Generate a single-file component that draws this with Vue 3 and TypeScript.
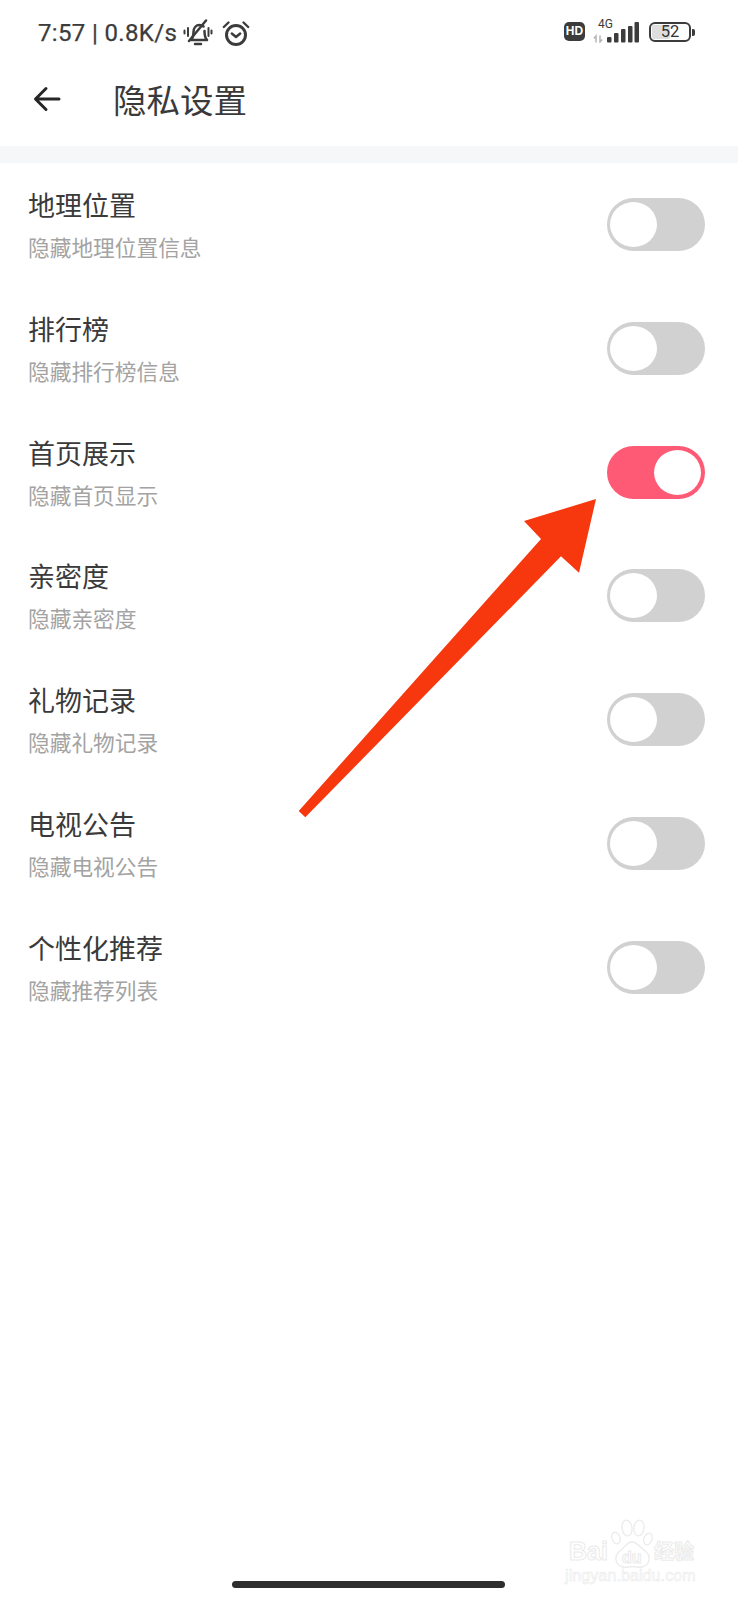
<template>
  <div class="page">
    <header class="status">
      <div class="status-left">
        <span class="clock">7:57 | 0.8K/s</span>
        <svg class="ic-bell" viewBox="0 0 30 28" fill="none" stroke="#3c3c3c" stroke-linecap="round" stroke-linejoin="round">
          <path d="M8 21c2-2 2.500-4 2.500-8 0-4 2.500-7 6-7 1.500 0 3 .5 4 1.500M21.500 12c0 4 .5 7 2.500 9H8" stroke-width="2.500" />
          <path d="M12 25h6" stroke-width="2.500" />
          <path d="M6 22 23 1.500" stroke-width="2.500" />
          <path d="M5 9v8M1.500 11.500v3M25.500 9v8M28.500 11.500v3" stroke-width="2" />
        </svg>
        <svg class="ic-alarm" viewBox="0 0 28 26" fill="none" stroke="#3c3c3c">
          <circle cx="14" cy="15" r="9.500" stroke-width="3" />
          <path d="m9.800 13.500 4.200 3.500 4.200-3.500" stroke-width="2.400" stroke-linecap="round" stroke-linejoin="round" />
          <path d="M1.800 7 6.500 2.500M26.200 7l-4.700-4.500" stroke-width="2.400" stroke-linecap="round" />
        </svg>
      </div>
      <div class="status-right">
        <span class="hd">HD</span>
        <div class="signal">
          <span class="net">4G</span>
          <svg class="ic-signal" viewBox="0 0 46 23" fill="#3c3c3c">
            <path d="M3 22.500v-6.500L.8 18.500M7 15.500V22l2.200-2.500" fill="none" stroke="#b4b4b4" stroke-width="1.500" />
            <rect x="14" y="17" width="4.500" height="5.500" rx="1" />
            <rect x="21" y="13" width="4.500" height="9.500" rx="1" />
            <rect x="28" y="9" width="4.500" height="13.500" rx="1" />
            <rect x="35" y="6" width="4.500" height="16.500" rx="1" />
            <rect x="41.500" y="2" width="4.500" height="20.500" rx="1" />
          </svg>
        </div>
        <div class="battery">
          <div class="battery-body">
            <span class="battery-fill"></span>
            <span class="battery-num">52</span>
          </div>
          <span class="battery-cap"></span>
        </div>
      </div>
    </header>

    <nav class="topbar">
      <svg class="ic-back" viewBox="0 0 28 26" fill="none" stroke="#262626" stroke-width="3" stroke-linecap="round" stroke-linejoin="round">
        <path d="M26 13H3M13 2.500 2.500 13 13 23.500" />
      </svg>
      <h1>隐私设置</h1>
    </nav>
    <div class="band"></div>

    <ul class="list">
      <li v-for="item in items" :key="item.title" class="row">
        <div class="text">
          <div class="title">{{ item.title }}</div>
          <div class="sub">{{ item.sub }}</div>
        </div>
        <span class="switch" :class="{ on: item.on }"><i></i></span>
      </li>
    </ul>

    <svg class="arrow" viewBox="0 0 738 1600">
      <polygon points="596,499 524,521 541,539 298.700,811 305.300,817.300 561,556.300 579,572.700" fill="#f7370e" />
    </svg>

    <div class="home-bar"></div>

    <div class="watermark">
      <svg class="paw" viewBox="0 0 44 52" fill="none" stroke="#ebebeb" stroke-width="1.300">
        <ellipse cx="6" cy="20" rx="4" ry="6" transform="rotate(-20 6 20)" />
        <ellipse cx="17" cy="10" rx="5" ry="8" transform="rotate(-8 17 10)" />
        <ellipse cx="29" cy="10" rx="5" ry="8" transform="rotate(8 29 10)" />
        <ellipse cx="38" cy="21" rx="4" ry="6" transform="rotate(20 38 21)" />
        <path d="M22 24c-5 0-7 5-11 8-4 3-6 6-5 10 1 6 7 8 12 7 3-.5 6-.5 9 0 5 1 11-1 12-7 1-4-1-7-5-10-4-3-7-8-12-8Z" />
      </svg>
      <span class="wm-bai">Bai</span>
      <span class="wm-du">du</span>
      <span class="wm-cn">经验</span>
      <span class="wm-url">jingyan.baidu.com</span>
    </div>
  </div>
</template>

<script setup lang="ts">
interface PrivacyItem {
  title: string
  sub: string
  on?: boolean
}

const items: PrivacyItem[] = [
  { title: '地理位置', sub: '隐藏地理位置信息' },
  { title: '排行榜', sub: '隐藏排行榜信息' },
  { title: '首页展示', sub: '隐藏首页显示', on: true },
  { title: '亲密度', sub: '隐藏亲密度' },
  { title: '礼物记录', sub: '隐藏礼物记录' },
  { title: '电视公告', sub: '隐藏电视公告' },
  { title: '个性化推荐', sub: '隐藏推荐列表' }
]
</script>

<style>
html,
body {
  margin: 0;
  background: #fff;
}
</style>

<style scoped>
.page {
  position: relative;
  width: 738px;
  height: 1600px;
  overflow: hidden;
  background: #fff;
  font-family: 'Noto Sans CJK SC', 'Noto Sans', sans-serif;
}

.status {
  height: 64px;
  box-sizing: border-box;
  padding: 18px 43px 0 38px;
  display: flex;
  justify-content: space-between;
  align-items: flex-start;
}

.status-left {
  display: flex;
  align-items: center;
  height: 30px;
}

.clock {
  font-family: Roboto, 'Noto Sans', sans-serif;
  font-size: 24px;
  line-height: 30px;
  color: #3c3c3c;
  letter-spacing: 0.35px;
  -webkit-text-stroke: 0.25px #3c3c3c;
  white-space: nowrap;
}

.ic-bell {
  width: 30px;
  height: 28px;
  margin-left: 6px;
}

.ic-alarm {
  width: 28px;
  height: 26px;
  margin-left: 9px;
}

.status-right {
  display: flex;
  align-items: flex-start;
}

.hd {
  width: 21px;
  height: 19px;
  margin-top: 4px;
  border-radius: 5px;
  background: #3c3c3c;
  color: #fff;
  font: 700 12px/19px 'Liberation Sans', sans-serif;
  text-align: center;
}

.signal {
  position: relative;
  width: 46px;
  height: 30px;
  margin-left: 8px;
}

.net {
  position: absolute;
  left: 5px;
  top: -1px;
  font: 12px/14px Roboto, sans-serif;
  color: #3c3c3c;
}

.ic-signal {
  position: absolute;
  left: 0;
  top: 2px;
  width: 46px;
  height: 23px;
}

.battery {
  display: flex;
  align-items: center;
  margin-left: 10px;
  margin-top: 4px;
}

.battery-body {
  position: relative;
  width: 38px;
  height: 16px;
  border: 2.500px solid #3c3c3c;
  border-radius: 6px;
}

.battery-fill {
  position: absolute;
  left: 1px;
  top: 1px;
  bottom: 1px;
  width: 18px;
  border-radius: 2px;
  background: #dedede;
}

.battery-num {
  position: absolute;
  inset: 0;
  text-align: center;
  font: 16.500px/16px Roboto, sans-serif;
  color: #333;
}

.battery-cap {
  width: 3px;
  height: 7px;
  margin-left: 1px;
  border-radius: 0 2px 2px 0;
  background: #3c3c3c;
}

.topbar {
  height: 82px;
  box-sizing: border-box;
  padding: 0 0 12px 33px;
  display: flex;
  align-items: center;
}

.ic-back {
  width: 28px;
  height: 26px;
}

.topbar h1 {
  margin: 0 0 0 52px;
  font-size: 33.500px;
  font-weight: 400;
  line-height: 44px;
  color: #3a3a3a;
}

.band {
  height: 17px;
  background: #f6f7f9;
}

.list {
  margin: 0;
  padding: 0;
  list-style: none;
}

.row {
  height: 123.800px;
  box-sizing: border-box;
  padding: 22px 33px 0 28px;
  display: flex;
  justify-content: space-between;
  align-items: flex-start;
}

.title {
  font-size: 27px;
  line-height: 40px;
  color: #3a3a3a;
}

.sub {
  margin-top: 6px;
  font-size: 21.700px;
  line-height: 32px;
  color: #a3a3a3;
}

.switch {
  position: relative;
  flex: none;
  display: block;
  width: 98px;
  height: 53px;
  margin-top: 13px;
  border-radius: 27px;
  background: #d1d1d1;
}

.switch i {
  position: absolute;
  left: 3px;
  top: 4px;
  width: 47px;
  height: 45px;
  border-radius: 50%;
  background: #fff;
}

.switch.on {
  background: #ff5a75;
}

.switch.on i {
  left: auto;
  right: 4px;
}

.arrow {
  position: absolute;
  left: 0;
  top: 0;
  width: 738px;
  height: 1600px;
  pointer-events: none;
}

.home-bar {
  position: absolute;
  left: 232px;
  top: 1581px;
  width: 273px;
  height: 7px;
  border-radius: 4px;
  background: #2e2e2e;
}

.watermark {
  position: absolute;
  left: 564px;
  top: 1518px;
  width: 134px;
  height: 66px;
  color: transparent;
  -webkit-text-stroke: 1px #ebebeb;
  white-space: nowrap;
}

.paw {
  position: absolute;
  left: 46px;
  top: 0;
  width: 44px;
  height: 52px;
}

.wm-bai {
  position: absolute;
  left: 5px;
  top: 19px;
  font: 700 25px/28px 'Liberation Sans', sans-serif;
}

.wm-du {
  position: absolute;
  left: 58px;
  top: 30px;
  font: 700 16px/20px 'Liberation Sans', sans-serif;
}

.wm-cn {
  position: absolute;
  left: 90px;
  top: 19px;
  font: 700 20px/28px 'Noto Sans CJK SC', sans-serif;
}

.wm-url {
  position: absolute;
  left: 1px;
  top: 49px;
  font: 16px/18px 'Liberation Sans', sans-serif;
  letter-spacing: 0.1px;
  -webkit-text-stroke: 0.6px #ebebeb;
}
</style>
